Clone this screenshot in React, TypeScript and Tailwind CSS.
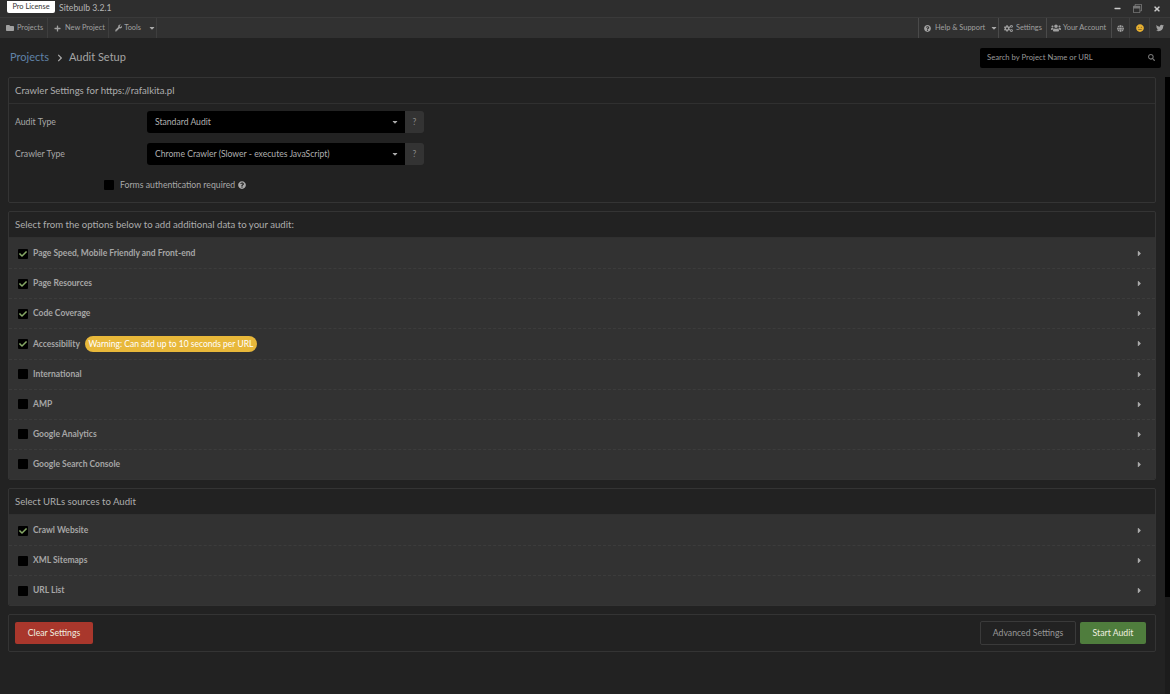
import React from "react";
import { FaFolder, FaPlus, FaWrench, FaQuestionCircle, FaCogs, FaUsers, FaGlobe, FaTwitter, FaCheck, FaSearch, FaChevronRight, FaCaretDown, FaCaretRight, FaRegWindowRestore, FaTimes, FaMinus, FaMeh } from "react-icons/fa";

const Caret = () => <FaCaretDown className="text-[8px] text-[#aaa]" />;

function Check({ on }: { on: boolean }) {
  return (
    <span className="flex h-[10px] w-[10px] shrink-0 items-center justify-center rounded-[1px] bg-black">
      {on && <FaCheck className="text-[8px] text-[#86a866]" />}
    </span>
  );
}

function Row({ label, on, children, first }: { label: string; on: boolean; children?: React.ReactNode; first?: boolean }) {
  return (
    <div className={`flex h-[30.125px] items-center border-t pl-[9px] pr-[11px] ${first ? "border-transparent" : "border-dashed border-[#3c3c3c]"}`}>
      <Check on={on} />
      <span className="ml-[5px] text-[8.5px] font-bold text-[#a6a6a6]">{label}</span>
      {children}
      <FaCaretRight className="ml-auto text-[9px] text-[#aaa]" />
    </div>
  );
}

function Select({ text }: { text: string }) {
  return (
    <div className="flex h-[22px] items-center">
      <div className="flex h-[22px] w-[258px] items-center justify-between rounded-l-[3px] bg-black pl-[8px] pr-[6px] text-[8.6px] text-[#b0b0b0]">
        <span>{text}</span>
        <Caret />
      </div>
      <div className="flex h-[22px] w-[19px] items-center justify-center rounded-r-[3px] bg-[#333] text-[8.5px] text-[#888]">?</div>
    </div>
  );
}

function Panel({ title, children }: { title: string; children: React.ReactNode }) {
  return (
    <section className="overflow-hidden rounded-[2px] border border-[#343434]">
      <h2 className="flex h-[26px] items-center border-b border-[#303030] pl-[6px] pt-[2px] text-[9.6px] font-normal text-[#adadad]">{title}</h2>
      {children}
    </section>
  );
}

export default function App() {
  return (
    <div className="flex h-[694px] w-[1170px] flex-col overflow-hidden whitespace-nowrap bg-[#222222] font-['Lato','Open_Sans',sans-serif] text-[#a8a8a8]">
      <header className="flex h-[17px] shrink-0 items-center bg-[#2e2e2e]">
        <span className="mb-[4px] ml-[7px] flex h-[12px] w-[48px] items-center justify-center rounded-b-[2px] bg-white text-[7.4px] text-[#333]">Pro License</span>
        <span className="mb-[2px] ml-[4px] text-[8.7px] text-[#b5b5b5]">Sitebulb 3.2.1</span>
        <div className="ml-auto flex items-center pr-[3px] text-[#ccc]">
          <span className="flex w-[20px] justify-center"><FaMinus className="text-[7px]" /></span>
          <span className="flex w-[20px] justify-center"><FaRegWindowRestore className="text-[9px] text-[#777]" /></span>
          <span className="flex w-[20px] justify-center"><FaTimes className="text-[8px]" /></span>
        </div>
      </header>

      <nav className="flex h-[21px] shrink-0 items-center border-t border-[#3a3a3a] bg-[#313131] text-[7.4px] text-[#a0a0a0]">
        <div className="flex h-full w-[48px] items-center gap-[3px] border-r border-[#3e3e3e] pl-[6px]"><FaFolder className="text-[8px]" />Projects</div>
        <div className="flex h-full w-[61px] items-center gap-[4px] border-r border-[#3e3e3e] pl-[6px]"><FaPlus className="text-[7px]" />New Project</div>
        <div className="flex h-full w-[48px] items-center gap-[2px] border-r border-[#3e3e3e] pl-[6px]"><FaWrench className="text-[8px]" />Tools<span className="ml-[5px]"><Caret /></span></div>
        <div className="ml-auto flex h-full items-center">
          <div className="flex h-full w-[81px] items-center gap-[4px] border-x border-[#4a4a4a] pl-[5px]"><FaQuestionCircle className="shrink-0 text-[7px]" />Help &amp; Support<span className="ml-[1px]"><Caret /></span></div>
          <div className="flex h-full w-[48px] items-center gap-[3px] border-r border-[#4a4a4a] pl-[5px]"><FaCogs className="text-[9px]" />Settings</div>
          <div className="flex h-full w-[65px] items-center gap-[2px] border-r border-[#4a4a4a] pl-[4px]"><FaUsers className="text-[10px]" />Your Account</div>
          <div className="flex h-full w-[18px] items-center justify-center border-r border-[#3e3e3e]"><FaGlobe className="text-[7px]" /></div>
          <div className="flex h-full w-[20px] items-center justify-center border-r border-[#3e3e3e]"><FaMeh className="text-[8px] text-[#e8b030]" /></div>
          <div className="flex h-full w-[20px] items-center justify-center"><FaTwitter className="text-[8px]" /></div>
        </div>
      </nav>

      <div className="flex min-h-0 flex-1">
        <main className="w-[1165px] shrink-0 pl-[8px]">
          <div className="flex h-[39px] items-center justify-between pr-[4px]">
            <div className="flex items-center pl-[2px] text-[11px]">
              <span className="text-[#6083a8]">Projects</span>
              <FaChevronRight className="ml-[7px] mr-[5px] text-[8px] text-[#aaa]" />
              <span className="text-[#a5a5a5]">Audit Setup</span>
            </div>
            <div className="flex h-[20px] w-[181px] items-center justify-between rounded-[2px] bg-black pl-[7px] pr-[6px] text-[7.7px] text-[#999]">
              Search by Project Name or URL
              <FaSearch className="text-[7px] text-[#777]" />
            </div>
          </div>

          <div className="flex w-[1148px] flex-col gap-[8px]">
            <Panel title="Crawler Settings for https://rafalkita.pl">
              <div className="h-[98px] pl-[6px] pt-[7px] text-[8.7px]">
                <div className="flex h-[22px] items-center">
                  <span className="w-[132px]">Audit Type</span>
                  <Select text="Standard Audit" />
                </div>
                <div className="mt-[10px] flex h-[22px] items-center">
                  <span className="w-[132px]">Crawler Type</span>
                  <Select text="Chrome Crawler (Slower - executes JavaScript)" />
                </div>
                <div className="ml-[89px] mt-[10px] flex h-[20px] items-center">
                  <Check on={false} />
                  <span className="ml-[6px]">Forms authentication required</span>
                  <FaQuestionCircle className="ml-[3px] text-[8px]" />
                </div>
              </div>
            </Panel>

            <Panel title="Select from the options below to add additional data to your audit:">
              <div className="bg-[#323232]">
                <Row first on label="Page Speed, Mobile Friendly and Front-end" />
                <Row on label="Page Resources" />
                <Row on label="Code Coverage" />
                <Row on label="Accessibility">
                  <span className="ml-[5px] flex h-[16px] items-center rounded-full bg-[#e8b83a] px-[3.5px] text-[8.5px] text-white">Warning: Can add up to 10 seconds per URL</span>
                </Row>
                <Row on={false} label="International" />
                <Row on={false} label="AMP" />
                <Row on={false} label="Google Analytics" />
                <Row on={false} label="Google Search Console" />
              </div>
            </Panel>

            <Panel title="Select URLs sources to Audit">
              <div className="bg-[#323232]">
                <Row first on label="Crawl Website" />
                <Row on={false} label="XML Sitemaps" />
                <Row on={false} label="URL List" />
              </div>
            </Panel>

            <section className="flex h-[38px] items-center justify-between rounded-[2px] border border-[#343434] pl-[6px] pr-[9px]">
              <button className="h-[22px] w-[78px] rounded-[2px] bg-[#a9372c] pb-[1px] text-[8.7px] text-[#f0f0e0]">Clear Settings</button>
              <div className="flex items-center gap-[4px]">
                <button className="h-[24px] w-[96px] rounded-[2px] border border-[#3a3a3a] pb-[1px] text-[8.7px] text-[#999]">Advanced Settings</button>
                <button className="h-[22px] w-[66px] rounded-[2px] bg-[#4f7d3d] pb-[1px] text-[8.7px] text-[#f0f0e0]">Start Audit</button>
              </div>
            </section>
          </div>
        </main>
        <div className="mt-[39px] w-[5px] bg-[#1c1c1c]">
          <div className="h-[520px] bg-black" />
        </div>
      </div>
    </div>
  );
}
